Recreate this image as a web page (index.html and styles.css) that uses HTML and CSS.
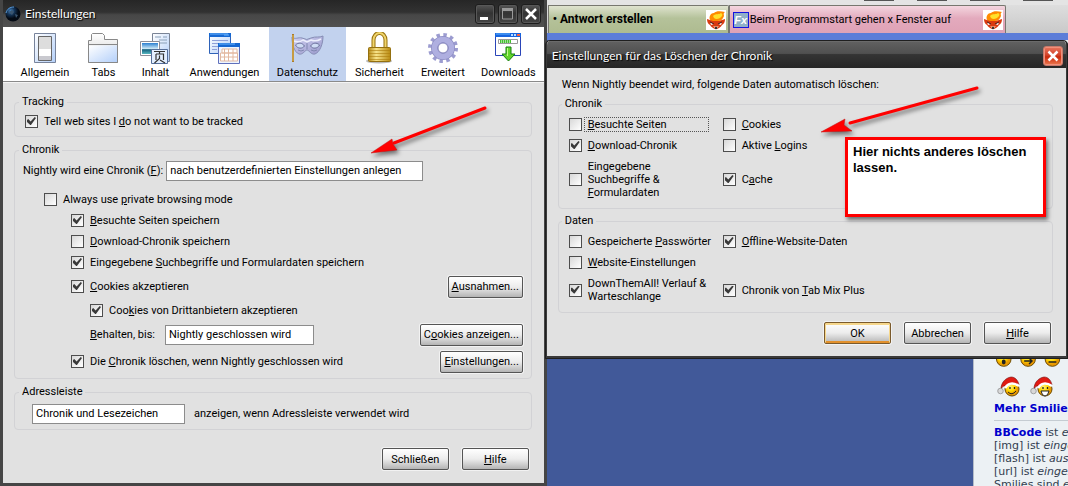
FILE: index.html
```html
<!DOCTYPE html>
<html lang="de">
<head>
<meta charset="utf-8">
<title>Einstellungen</title>
<link rel="stylesheet" href="styles.css">
</head>
<body>
<svg class="defs" aria-hidden="true">
  <defs>
    <linearGradient id="pale" x1="0" y1="0" x2="1" y2="1"><stop offset="0" stop-color="#fff"/><stop offset="1" stop-color="#b4d0fa"/></linearGradient>
    <linearGradient id="grey" x1="0" y1="0" x2="0" y2="1"><stop offset="0" stop-color="#fff"/><stop offset="1" stop-color="#ccc"/></linearGradient>
    <linearGradient id="gold" x1="0" y1="0" x2="1" y2="0"><stop offset="0" stop-color="#b58a18"/><stop offset=".35" stop-color="#f8e48a"/><stop offset="1" stop-color="#b98a10"/></linearGradient>
    <linearGradient id="lilac" x1="0" y1="0" x2="1" y2="1"><stop offset="0" stop-color="#d0d0f2"/><stop offset="1" stop-color="#9a9acb"/></linearGradient>
    <linearGradient id="photo" x1="0" y1="0" x2="0" y2="1"><stop offset="0" stop-color="#2b7fd0"/><stop offset=".55" stop-color="#d8f0f8"/><stop offset=".6" stop-color="#14607e"/><stop offset="1" stop-color="#58b8c0"/></linearGradient>
    <radialGradient id="face" cx=".4" cy=".35"><stop offset="0" stop-color="#fff27a"/><stop offset=".6" stop-color="#ffd800"/><stop offset="1" stop-color="#e89800"/></radialGradient>
    <radialGradient id="globe" cx=".35" cy=".3"><stop offset="0" stop-color="#4a86c0"/><stop offset=".5" stop-color="#143458"/><stop offset="1" stop-color="#040a14"/></radialGradient>
    <symbol id="fox" viewBox="0 0 20 20">
      <rect width="20" height="20" fill="#fff"/>
      <path d="M5 11C2 8 4 3 8 3c2-2 6-2 11-1-2 1-1 3-1 4-1 3-3 5-6 5z" fill="#ff8a00"/>
      <path d="M7 6c3-3 6-1 8-3 1 1 2 1 1 3-2 3-6 4-8 2z" fill="#ffe02a"/>
      <path d="M1 9l6 2h6l6-2c0 3-1 5-3 6-1 2-4 4-6 4s-5-2-6-4C2 14 1 12 1 9z" fill="#d93a10"/>
      <path d="M4 12l4 2-3 1zM16 12l-4 2 3 1z" fill="#fff"/>
      <path d="M4 12l4 2M16 12l-4 2" stroke="#401008"/>
      <path d="M7 16q3 1 6 0l-3 3z" fill="#ffe3c4"/>
      <circle cx="10" cy="18" r="1.200" fill="#333"/>
    </symbol>
    <symbol id="santa" viewBox="0 0 24 22">
      <circle cx="15" cy="13" r="7" fill="url(#face)" stroke="#6b4a00"/>
      <path d="M4 13C4 7 8 2 14 1c4 0 7 3 8 8-5-3-9-2-13 2-2-2-3-1-5 2z" fill="#e01a12" stroke="#701010" stroke-width=".6"/>
      <path d="M8 12C11 7 16 6 22 10" fill="none" stroke="#fff" stroke-width="2.500"/>
      <circle cx="3.500" cy="15" r="2.800" fill="#d8d8d8" stroke="#888" stroke-width=".7"/>
      <path d="M13 11v2M17.500 11v2" stroke="#222" stroke-width="1.300"/>
    </symbol>
  </defs>
</svg>

<div class="desktop">
  <main class="browser">
    <div class="chrome-strip"><i></i><i></i><i></i><i></i></div>
    <nav class="tabs">
      <a class="tab tab-active" href="#antwort"><span>• Antwort erstellen</span><svg class="tab-icon"><use href="#fox"/></svg></a>
      <a class="tab tab-pink" href="#thema"><span class="fx">Fx</span><span class="tab-text">Beim Programmstart gehen x Fenster auf</span><svg class="tab-icon"><use href="#fox"/></svg></a>
    </nav>
    <div class="page">
      <aside class="forum">
        <div class="smileys">
          <svg width="76" height="16" viewBox="0 0 76 16">
            <g fill="url(#face)" stroke="#6b4a00"><circle cx="10" cy="7" r="7.500"/><circle cx="35" cy="7" r="7.500"/><circle cx="60" cy="7" r="7.500"/></g>
            <ellipse cx="10" cy="10" rx="2" ry="2.500" fill="#222"/><path d="M31 9h7M36 6l3 3-3 3M56 10h8" stroke="#222" stroke-width="1.500" fill="none"/>
          </svg>
        </div>
        <div class="smileys hats">
          <svg width="24" height="22"><use href="#santa"/><path d="M11 16q4 4 8-1" fill="none" stroke="#222"/></svg>
          <svg width="24" height="22"><use href="#santa"/><path d="M11 15h8q-1 5-4 5t-4-5z" fill="#fff" stroke="#222"/></svg>
        </div>
        <a class="more" href="#smilies">Mehr Smilies</a>
        <p class="codes"><a href="#bbcode">BBCode</a> ist <em>eingeschaltet</em><br>[img] ist <em>eingeschaltet</em><br>[flash] ist <em>ausgeschaltet</em><br>[url] ist <em>eingeschaltet</em><br>Smilies sind <em>eingeschaltet</em></p>
      </aside>
    </div>
  </main>

  <section class="window prefs" aria-label="Einstellungen">
    <header class="titlebar">
      <svg width="16" height="16" viewBox="0 0 16 16"><circle cx="8" cy="8" r="7.500" fill="url(#globe)"/><path d="M4 6l3-2 2 2-2 3zM10 8l3 1-2 3zM5 11l3 1" fill="#3a5570"/><path d="M1 7C2 3 5 1 9 1" fill="none" stroke="#5b9bd8"/></svg>
      <h1>Einstellungen</h1>
      <button class="winbtn" aria-label="Minimieren"><svg width="20" height="20"><path d="M5 13h8v3H5z" fill="#fff"/></svg></button>
      <button class="winbtn" aria-label="Maximieren"><svg width="20" height="20"><path d="M4 6h11M4.500 5v10h10V5z" fill="none" stroke="#999"/><path d="M4 4h11v3H4z" fill="#999"/></svg></button>
      <button class="winbtn" aria-label="Schließen"><svg width="20" height="20"><path d="M5 5l10 10M15 5L5 15" stroke="#fff" stroke-width="2.500"/></svg></button>
    </header>

    <nav class="toolbar">
      <button class="tool"><svg width="32" height="32"><path d="M5.500 1.500h21v29h-21z" fill="url(#pale)" stroke="#77839b"/><path d="M9.500 4.500h13v24h-13z" fill="#ddd" stroke="#666"/><path d="M10 17h12v7H10z" fill="#fff"/><path d="M10 24h12v4H10z" fill="#c9c9cf"/></svg>Allgemein</button>
      <button class="tool"><svg width="32" height="32"><path d="M1.500 30.500V8.500h3v-6l1-1h10l2 2v4h13v23z" fill="url(#grey)" stroke="#888"/><path d="M2 13.500h28v16.500H2z" fill="url(#pale)"/><path d="M1.500 12.500h29M1.500 30.500h29V8" fill="none" stroke="#888"/></svg>Tabs</button>
      <button class="tool"><svg width="32" height="32"><path d="M13.500 1.500h17v28h-17z" fill="url(#pale)" stroke="#7a8496"/><path d="M16 5h6M24 5h4M20 8h8M18 11h10" stroke="#8aa0b8"/><path d="M1.500 9.500h19v14h-19z" fill="#fff" stroke="#8e8e98"/><path d="M3 11h16v11H3z" fill="url(#photo)"/><path d="M12.500 17.500h16v14h-16z" fill="#e3efff" stroke="#556e9a"/><path d="M15 19.500h11M20.500 19v3M17 22h7.500v6M17 22v6M20.500 23.500v3l-5 4.500M21 28l5 3" fill="none" stroke="#333" stroke-width="1.200"/></svg>Inhalt</button>
      <button class="tool"><svg width="32" height="32"><path d="M1.500 1.500h21v20h-21z" fill="url(#pale)" stroke="#2e62b8"/><path d="M1 1h22v4H1z" fill="#1668d2"/><path d="M2 2h18M16 3h5" stroke="#68b4ff"/><path d="M4 8.500h16M4 11.500h14M4 14.500h6M4 17.500h5" stroke="#8fa0d8"/><path d="M10.500 11.500h21v20h-21z" fill="#eef5ff" stroke="#6070bc"/><path d="M10 11h22v4H10z" fill="#1668d2"/><path d="M11 12h16" stroke="#68b4ff"/><path d="M14 17h15v4H14zM12.500 21h17v8h-17zM12 25h18M16.500 17v12M20.500 17v12M25 17v12" fill="#fff" stroke="#e2b8a0"/></svg>Anwendungen</button>
      <button class="tool selected" aria-pressed="true"><svg width="34" height="32" viewBox="0 0 34 32"><path d="M2 5C5 8 8 5 12 6q5 3 9 0c5-2 8 0 12-2 0 8-3 16-8 18-4 1-6-4-8-4s-4 5-8 4C4 20 2 12 2 5z" fill="url(#lilac)" stroke="#868db5"/><path d="M4 9q5 2 9-1l4 2 4-2q5 2 10-1" fill="none" stroke="#eceefc" stroke-width="1.500"/><path d="M5.500 13c3-3 7-2 9 1-2 3-7 3-9-1zM29.500 13c-3-3-7-2-9 1 2 3 7 3 9-1z" fill="#cfdcf4" stroke="#6c729c"/><path d="M17 11v6M8 18q3 2 6 0M21 18q3 2 6 0" stroke="#8087b0" fill="none"/><path d="M3 2v28" stroke="#a97b2b" stroke-width="2"/><path d="M3 3v26" stroke="#e3bd5c"/></svg>Datenschutz</button>
      <button class="tool"><svg width="32" height="32"><ellipse cx="16" cy="29" rx="13" ry="2.500" fill="#bbb"/><path d="M10.500 16V8a6 7 0 0 1 12 0v8" fill="none" stroke="#96700c" stroke-width="4"/><path d="M10.500 16V8a6 7 0 0 1 12 0v8" fill="none" stroke="#efd46c" stroke-width="2"/><rect x="5.500" y="15.500" width="22" height="14" rx="1" fill="url(#gold)" stroke="#94700f"/><path d="M6 18.500h21M6 21.500h21M6 24.500h21M6 27.500h21" stroke="#ab7b0b" stroke-opacity=".6"/></svg>Sicherheit</button>
      <button class="tool"><svg width="32" height="32"><circle cx="16" cy="16" r="12.500" fill="none" stroke="#9c9cd0" stroke-width="5" stroke-dasharray="3.270 3.270"/><circle cx="16" cy="16" r="8.500" fill="none" stroke="#8e8ec4" stroke-width="7"/><circle cx="16" cy="16" r="8.500" fill="none" stroke="#afafe0" stroke-width="5.500"/><circle cx="16" cy="16" r="5" fill="#fff" stroke="#8585bd"/></svg>Erweitert</button>
      <button class="tool"><svg width="32" height="32"><path d="M3.500 1.500h25v22h-25z" fill="#fff" stroke="#2a45b8"/><path d="M3 1h26v4H3z" fill="#1764df"/><path d="M4 2h14" stroke="#60b4ff"/><path d="M19 2h2v2h-2zM22 2h2v2h-2z" fill="#b8dcff"/><path d="M25 2h3v2h-3z" fill="#ff6038"/><path d="M6.500 7.500h19v4h-19z" fill="#fff" stroke="#999"/><path d="M8 9.500h11" stroke="#45c130" stroke-width="3" stroke-dasharray="1.500 .5"/><path d="M14 15h5v7h4l-6.500 7-6.500-7h4z" fill="#63d42b" stroke="#168012"/><path d="M15.500 16v8" stroke="#c4f98a"/></svg>Downloads</button>
    </nav>

    <form class="body">
      <fieldset class="tracking">
        <legend>Tracking</legend>
        <div class="row level-0"><label class="check"><input type="checkbox" checked><span>Tell web sites I <u>d</u>o not want to be tracked</span></label></div>
      </fieldset>

      <fieldset class="history">
        <legend>Chronik</legend>
        <div class="row mode"><label for="mode">Nightly wird eine Chronik (<u>F</u>):</label>
          <select id="mode"><option>nach benutzerdefinierten Einstellungen anlegen</option></select></div>
        <div class="row level-1"><label class="check"><input type="checkbox"><span>Always use <u>p</u>rivate browsing mode</span></label></div>
        <div class="row level-2"><label class="check"><input type="checkbox" checked><span><u>B</u>esuchte Seiten speichern</span></label></div>
        <div class="row level-2"><label class="check"><input type="checkbox"><span><u>D</u>ownload-Chronik speichern</span></label></div>
        <div class="row level-2"><label class="check"><input type="checkbox" checked><span>Eingegebene <u>S</u>uchbegriffe und Formulardaten speichern</span></label></div>
        <div class="row tall level-2"><label class="check"><input type="checkbox" checked><span><u>C</u>ookies akzeptieren</span></label><button type="button" class="btn"><u>A</u>usnahmen...</button></div>
        <div class="row level-3"><label class="check"><input type="checkbox" checked><span>Coo<u>k</u>ies von Drittanbietern akzeptieren</span></label></div>
        <div class="row tall level-3"><label for="keep"><u>B</u>ehalten, bis:</label><select id="keep"><option>Nightly geschlossen wird</option></select><button type="button" class="btn">C<u>o</u>okies anzeigen...</button></div>
        <div class="row tall level-2"><label class="check"><input type="checkbox" checked><span>Die <u>C</u>hronik löschen, wenn Nightly geschlossen wird</span></label><button type="button" class="btn"><u>E</u>instellungen...</button></div>
      </fieldset>

      <fieldset class="address">
        <legend>Adressleiste</legend>
        <div class="row"><select id="bar"><option>Chronik und Lesezeichen</option></select><label for="bar">anzeigen, wenn Adressleiste verwendet wird</label></div>
      </fieldset>

      <div class="actions"><button type="button" class="btn wide">Schließen</button><button type="button" class="btn wide"><u>H</u>ilfe</button></div>
    </form>
  </section>

  <section class="window dialog" role="dialog" aria-label="Einstellungen für das Löschen der Chronik">
    <header class="titlebar">
      <h2>Einstellungen für das Löschen der Chronik</h2>
      <button class="winbtn close" aria-label="Schließen"><svg width="18" height="18"><path d="M4.500 4.500l9 9M13.500 4.500l-9 9" stroke="#fff" stroke-width="2.500"/></svg></button>
    </header>
    <form class="body">
      <p class="intro">Wenn Nightly beendet wird, folgende Daten automatisch löschen:</p>
      <fieldset class="pairs">
        <legend>Chronik</legend>
        <div class="grid">
          <label class="check focus"><input type="checkbox"><span><u>B</u>esuchte Seiten</span></label>
          <label class="check"><input type="checkbox"><span><u>C</u>ookies</span></label>
          <label class="check"><input type="checkbox" checked><span><u>D</u>ownload-Chronik</span></label>
          <label class="check"><input type="checkbox"><span>Aktive <u>L</u>ogins</span></label>
          <label class="check multi"><input type="checkbox"><span>Eingegebene<br>Suchbegriffe &amp;<br><u>F</u>ormulardaten</span></label>
          <label class="check"><input type="checkbox" checked><span>C<u>a</u>che</span></label>
        </div>
      </fieldset>
      <fieldset class="pairs">
        <legend>Daten</legend>
        <div class="grid">
          <label class="check"><input type="checkbox"><span>Gespeicherte <u>P</u>asswörter</span></label>
          <label class="check"><input type="checkbox" checked><span><u>O</u>ffline-Website-Daten</span></label>
          <label class="check"><input type="checkbox"><span><u>W</u>ebsite-Einstellungen</span></label><span></span>
          <label class="check multi"><input type="checkbox" checked><span>DownThemAll! Verlauf &amp;<br>Warteschlange</span></label>
          <label class="check"><input type="checkbox" checked><span>Chronik von <u>T</u>ab Mix Plus</span></label>
        </div>
      </fieldset>
      <div class="actions"><button type="button" class="btn wide default">OK</button><button type="button" class="btn wide">Abbrechen</button><button type="button" class="btn wide"><u>H</u>ilfe</button></div>
    </form>
    <svg class="arrow arrow-dialog" width="162" height="54" viewBox="0 0 162 54"><path d="M157 4L30 39" stroke="#f00" stroke-width="3" stroke-linecap="round"/><path d="M1 48L25 35 24 41 32 47z" fill="#f00" stroke="#c01010" stroke-width=".5"/></svg>
    <p class="note">Hier nichts anderes löschen lassen.</p>
  </section>
  <svg class="arrow arrow-prefs" width="122" height="54" viewBox="0 0 122 54"><path d="M115 3L24 38" stroke="#f00" stroke-width="3" stroke-linecap="round"/><path d="M1 48L22 34 23 39 27 45z" fill="#f00" stroke="#c01010" stroke-width=".5"/></svg>
</div>
</body>
</html>
```

FILE: styles.css
```css
* { box-sizing: border-box; }
body { margin: 0; font: 11px/13px Roboto, "Liberation Sans", sans-serif; color: #000; }
button, select, input { font: inherit; color: inherit; margin: 0; }
h1, h2, p { margin: 0; }
.defs { position: absolute; width: 0; height: 0; }
.desktop { position: relative; min-height: 100vh; overflow: hidden; background: #415999; }

/* Browser behind the dialogs */
.browser { position: absolute; top: 0; right: 0; bottom: 0; left: 51%; display: flex; flex-direction: column; overflow: hidden; }
.chrome-strip { flex: none; height: 5px; background: #e4e4e4; display: flex; justify-content: flex-end; gap: 23px; padding-right: 15px; }
.chrome-strip i { width: 30px; height: 1px; background: #555; }
.tabs { display: flex; flex: none; height: 28px; padding-left: 3px; background: linear-gradient(#dedede, #c9c9c9); }
.tab { display: flex; align-items: center; color: #000; text-decoration: none; border: 1px solid #77776f; border-bottom: 0; padding: 0 2px 0 4px; border-radius: 0 2px 0 0; }
.tab-active { width: 181px; font-weight: bold; font-size: 12px; background: linear-gradient(#dfe3cf, #b5c29a 45%, #aebb90); }
.tab-pink { width: 277px; padding-left: 3px; background: linear-gradient(#f4d6df, #e3aabd 45%, #dfa2b6); }
.tab-icon { width: 20px; height: 20px; margin-left: auto; }
.tab-text { margin-left: 1px; }
.fx { width: 16px; height: 16px; border: 1px solid #1414e0; background: #8fb0c8; color: #fff; font: italic bold 11px/14px "Liberation Sans", sans-serif; text-align: center; }
.page { flex: 1; min-height: 0; border-top: 7px solid #5c7dd8; display: flex; justify-content: flex-end; background: #415999; }
.forum { width: 95px; padding: 312px 0 0 20px; background: #ecf1f4; border-left: 1px solid #b4bcc8; font: 11px/13px "DejaVu Sans", sans-serif; color: #323d4f; white-space: nowrap; overflow: hidden; }
.smileys { display: flex; gap: 9px; }
.hats { padding: 8px 0 4px 3px; }
.forum a { font-weight: bold; color: #0000cc; text-decoration: none; }
.forum .more { display: block; padding-bottom: 5px; border-bottom: 1px solid #c5ccd2; margin-bottom: 5px; }

/* Windows */
.window { position: absolute; display: flex; flex-direction: column; background: #e1e1e1; }
.prefs { left: 0; top: 0; bottom: 0; width: 51.2%; min-width: 540px; border: 3px solid #454545; border-top: 0; }
.dialog { left: 51%; right: 0; top: 40px; border: 2px solid #3a3a3a; border-top: 0; border-bottom-width: 3px; border-radius: 5px 5px 0 0; outline: 1px solid #1f1f1f; outline-offset: -1px; }
.titlebar { display: flex; align-items: center; gap: 3px; flex: none; height: 27px; padding: 0 3px 0 2px; color: #fff; background: linear-gradient(#262626, #323232 45%, #474747 55%, #505050); }
.titlebar h1, .titlebar h2 { flex: 1; font: 12px/16px Lato, "Open Sans", sans-serif; text-shadow: 1px 1px 1px #000; }
.titlebar h1 { padding-left: 1px; }
.dialog .titlebar { height: 28px; padding: 4px 3px 0 5px; border-radius: 5px 5px 0 0; background: linear-gradient(#8a8a8a, #606060 2px, #505050 48%, #343434 52%, #262626); }
.winbtn { width: 20px; height: 20px; padding: 0; border: 1px solid #1d1d1d; border-radius: 3px; background: linear-gradient(#555, #333 45%, #444); display: flex; align-items: center; justify-content: center; box-shadow: inset 0 0 0 1px #585858; }
.winbtn svg { flex: none; }
.close { border-color: #c8796b; background: linear-gradient(#e8765f, #d2432a 45%, #c9290c 55%, #ec7a50); box-shadow: inset 0 0 0 1px #f0907a; }

.toolbar { display: grid; grid-template-columns: 62fr 55fr 49fr 89fr 77fr 67fr 60fr 71fr; flex: none; height: 55px; padding-left: 11px; background: #fff; border-bottom: 1px solid #8a8a8a; }
.tool { display: flex; flex-direction: column; align-items: center; gap: 2px; border: 0; background: none; padding: 5px 0 0; line-height: 13px; }
.tool.selected { background: #c2d2ee; }

.body { flex: 1; display: flex; flex-direction: column; gap: 6px; padding: 12px 12px 0 11px; border-top: 1px solid #f4f4f4; }
fieldset { margin: 0; min-width: 0; padding: 0 8px 4px 4px; border: 1px solid #d2d2d5; border-radius: 4px; }
legend { padding: 0 3px; line-height: 14px; }
.row { display: flex; align-items: center; height: 21px; }
.row.tall { height: 27px; }
.row .btn { margin-left: auto; }
.level-0 { padding-left: 6px; margin-top: 2px; }
.level-1 { padding-left: 25px; }
.level-2 { padding-left: 52px; }
.level-3 { padding-left: 71px; }
.mode { padding-left: 4px; gap: 3px; margin: 3px 0 8px; }
.history { padding-bottom: 3px; }
.check { display: flex; align-items: center; gap: 6px; }
.check input { appearance: none; flex: none; width: 13px; height: 13px; border: 1px solid #4d4d4d; background: linear-gradient(135deg, #d8d8d8, #fff); }
.check input:checked::before { content: ""; display: block; width: 9px; height: 8px; margin: 1px; background: #3a3a3a; clip-path: polygon(0 38%, 14% 26%, 40% 55%, 86% 0, 100% 12%, 44% 100%, 36% 100%, 0 62%); }
u { text-underline-offset: 1px; }
select { appearance: none; height: 20px; padding: 0 3px; border: 1px solid #8c8c8c; border-radius: 0; background: #fff; }
#mode { width: 257px; }
#keep { width: 149px; margin-left: 10px; }
#bar { width: 153px; margin-right: 9px; }
.address { padding-bottom: 5px; }
.address .row { padding-left: 13px; margin-top: 4px; }
.btn { height: 22px; padding: 0 3px; border: 1px solid #555; border-radius: 2px; background: linear-gradient(#fff, #ececec 50%, #d0d0d0 75%, #b4b4b4); box-shadow: 0 0 0 1px #f2f2f2; white-space: nowrap; }
.btn.wide { width: 67px; }
.btn.default { border-color: #7a5a2c; box-shadow: inset 0 1px 0 1px #f6d78c, inset 0 -1px 0 1px #e2902c, 0 0 0 1px #f2f2f2; }
.actions { display: flex; justify-content: flex-end; gap: 13px; margin-top: 12px; padding-right: 3px; }

.dialog .body { padding: 10px 13px 12px 11px; gap: 5px; border-top: 0; }
.intro { padding-left: 4px; line-height: 14px; }
.dialog .pairs { padding: 0 4px 9px 3px; }
.grid { display: grid; grid-template-columns: 154px 1fr; padding: 3px 0 0 7px; }
.grid .check { min-height: 21px; }
.grid .multi { padding: 4px 0 0; }
.grid .multi + .check { padding-top: 4px; }
.focus { position: relative; }
.focus::after { content: ""; position: absolute; left: 15px; right: 14px; top: 3px; bottom: 3px; border: 1px dotted #555; }
.dialog .actions { margin-top: 4px; padding-right: 2px; }

/* Annotations drawn over the windows */
.arrow { position: absolute; filter: drop-shadow(2px 3px 2px rgba(0, 0, 0, .5)); pointer-events: none; }
.arrow-prefs { left: 370px; top: 105px; }
.arrow-dialog { left: 273px; top: 44px; }
.note { position: absolute; right: 20px; top: 97px; width: 201px; height: 80px; padding: 4px 5px; border: 3px solid #f00; background: #fff; box-shadow: 2px 3px 4px rgba(0, 0, 0, .5); font: bold 13px/16px "Liberation Sans", sans-serif; }
```
